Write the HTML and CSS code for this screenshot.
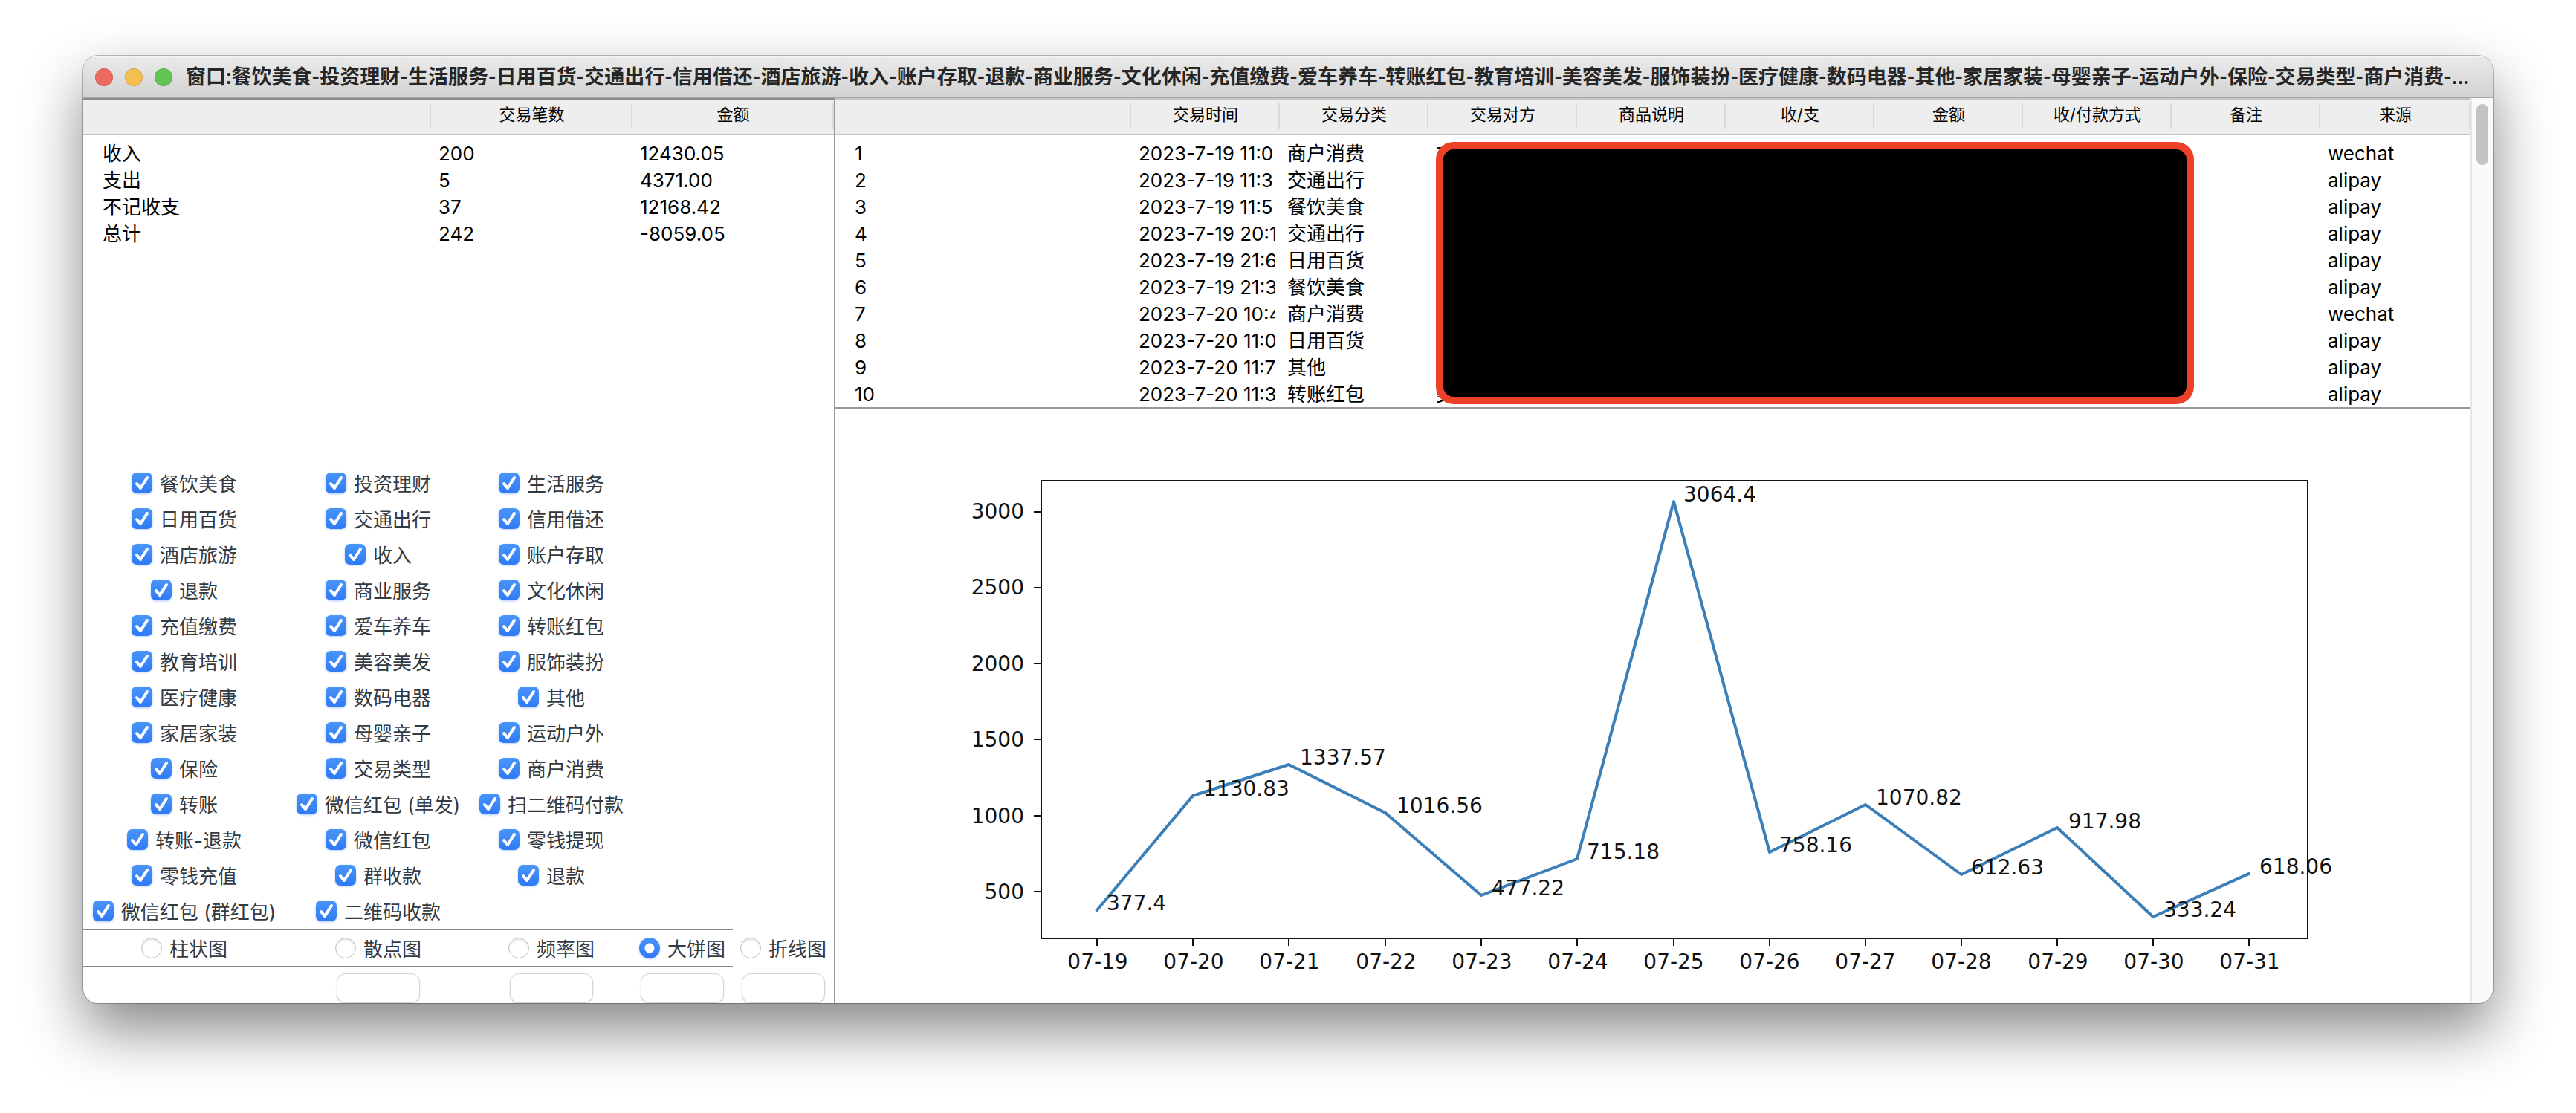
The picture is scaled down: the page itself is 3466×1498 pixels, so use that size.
FILE: index.html
```html
<!DOCTYPE html>
<html lang="zh-CN">
<head>
<meta charset="utf-8">
<title>账单统计</title>
<link rel="stylesheet" href="styles.css">
</head>
<body>
<main class="window">
  <header class="titlebar">
    <div class="lights">
      <button class="light close" aria-label="关闭"></button>
      <button class="light minimize" aria-label="最小化"></button>
      <button class="light zoom" aria-label="缩放"></button>
    </div>
    <h1 class="title">窗口:餐饮美食-投资理财-生活服务-日用百货-交通出行-信用借还-酒店旅游-收入-账户存取-退款-商业服务-文化休闲-充值缴费-爱车养车-转账红包-教育培训-美容美发-服饰装扮-医疗健康-数码电器-其他-家居家装-母婴亲子-运动户外-保险-交易类型-商户消费-...</h1>
  </header>
  <div class="content">
    <section class="side">
      <table class="tree summary">
        <thead><tr><th class="name"></th><th>交易笔数</th><th>金额</th></tr></thead>
        <tbody>
          <tr><td>收入</td><td>200</td><td>12430.05</td></tr>
          <tr><td>支出</td><td>5</td><td>4371.00</td></tr>
          <tr><td>不记收支</td><td>37</td><td>12168.42</td></tr>
          <tr><td>总计</td><td>242</td><td>-8059.05</td></tr>
        </tbody>
      </table>
      <form class="controls">
        <div class="grid filters">
          <label><input type="checkbox" checked>餐饮美食</label>
          <label><input type="checkbox" checked>投资理财</label>
          <label><input type="checkbox" checked>生活服务</label>
          <label class="first"><input type="checkbox" checked>日用百货</label>
          <label><input type="checkbox" checked>交通出行</label>
          <label><input type="checkbox" checked>信用借还</label>
          <label class="first"><input type="checkbox" checked>酒店旅游</label>
          <label><input type="checkbox" checked>收入</label>
          <label><input type="checkbox" checked>账户存取</label>
          <label class="first"><input type="checkbox" checked>退款</label>
          <label><input type="checkbox" checked>商业服务</label>
          <label><input type="checkbox" checked>文化休闲</label>
          <label class="first"><input type="checkbox" checked>充值缴费</label>
          <label><input type="checkbox" checked>爱车养车</label>
          <label><input type="checkbox" checked>转账红包</label>
          <label class="first"><input type="checkbox" checked>教育培训</label>
          <label><input type="checkbox" checked>美容美发</label>
          <label><input type="checkbox" checked>服饰装扮</label>
          <label class="first"><input type="checkbox" checked>医疗健康</label>
          <label><input type="checkbox" checked>数码电器</label>
          <label><input type="checkbox" checked>其他</label>
          <label class="first"><input type="checkbox" checked>家居家装</label>
          <label><input type="checkbox" checked>母婴亲子</label>
          <label><input type="checkbox" checked>运动户外</label>
          <label class="first"><input type="checkbox" checked>保险</label>
          <label><input type="checkbox" checked>交易类型</label>
          <label><input type="checkbox" checked>商户消费</label>
          <label class="first"><input type="checkbox" checked>转账</label>
          <label><input type="checkbox" checked>微信红包 (单发)</label>
          <label><input type="checkbox" checked>扫二维码付款</label>
          <label class="first"><input type="checkbox" checked>转账-退款</label>
          <label><input type="checkbox" checked>微信红包</label>
          <label><input type="checkbox" checked>零钱提现</label>
          <label class="first"><input type="checkbox" checked>零钱充值</label>
          <label><input type="checkbox" checked>群收款</label>
          <label><input type="checkbox" checked>退款</label>
          <label class="first"><input type="checkbox" checked>微信红包 (群红包)</label>
          <label><input type="checkbox" checked>二维码收款</label>
        </div>
        <div class="grid charts">
          <label><input type="radio" name="chart">柱状图</label>
          <label><input type="radio" name="chart">散点图</label>
          <label><input type="radio" name="chart">频率图</label>
          <label><input type="radio" name="chart" checked>大饼图</label>
          <label><input type="radio" name="chart">折线图</label>
        </div>
        <div class="grid actions">
          <button type="button" class="action first-action" aria-label="操作一"></button>
          <button type="button" class="action" aria-label="操作二"></button>
          <button type="button" class="action" aria-label="操作三"></button>
          <button type="button" class="action" aria-label="操作四"></button>
        </div>
      </form>
    </section>
    <section class="detail">
      <div class="records">
        <table class="tree">
          <thead><tr><th class="name"></th><th>交易时间</th><th>交易分类</th><th>交易对方</th><th>商品说明</th><th>收/支</th><th>金额</th><th>收/付款方式</th><th>备注</th><th class="source">来源</th></tr></thead>
          <tbody>
            <tr><td>1</td><td>2023-7-19 11:0</td><td>商户消费</td><td>支</td><td></td><td></td><td></td><td></td><td></td><td>wechat</td></tr>
            <tr><td>2</td><td>2023-7-19 11:3</td><td>交通出行</td><td></td><td></td><td></td><td></td><td></td><td></td><td>alipay</td></tr>
            <tr><td>3</td><td>2023-7-19 11:5</td><td>餐饮美食</td><td></td><td></td><td></td><td></td><td></td><td></td><td>alipay</td></tr>
            <tr><td>4</td><td>2023-7-19 20:1</td><td>交通出行</td><td></td><td></td><td></td><td></td><td></td><td></td><td>alipay</td></tr>
            <tr><td>5</td><td>2023-7-19 21:6</td><td>日用百货</td><td></td><td></td><td></td><td></td><td></td><td></td><td>alipay</td></tr>
            <tr><td>6</td><td>2023-7-19 21:3</td><td>餐饮美食</td><td></td><td></td><td></td><td></td><td></td><td></td><td>alipay</td></tr>
            <tr><td>7</td><td>2023-7-20 10:4</td><td>商户消费</td><td></td><td></td><td></td><td></td><td></td><td></td><td>wechat</td></tr>
            <tr><td>8</td><td>2023-7-20 11:0</td><td>日用百货</td><td></td><td></td><td></td><td></td><td></td><td></td><td>alipay</td></tr>
            <tr><td>9</td><td>2023-7-20 11:7</td><td>其他</td><td></td><td></td><td></td><td></td><td></td><td></td><td>alipay</td></tr>
            <tr><td>10</td><td>2023-7-20 11:3</td><td>转账红包</td><td>美</td><td></td><td></td><td></td><td></td><td></td><td>alipay</td></tr>
          </tbody>
        </table>
        <div class="mask"></div>
      </div>
      <svg class="chart" viewBox="0 0 2200 800" role="img" aria-label="折线图">
        <path class="axis" d="M277 97H1981V713H277ZM267 139H277M267 241H277M267 343H277M267 445H277M267 548H277M267 650H277M352 713V723M481 713V723M610 713V723M740 713V723M869 713V723M998 713V723M1128 713V723M1257 713V723M1386 713V723M1515 713V723M1644 713V723M1773 713V723M1902 713V723"/>
        <polyline class="line" points="352,675 481,521 610,479 740,544 869,655 998,606 1128,125 1257,597 1386,533 1515,627 1644,564 1773,684 1902,626"/>
        <g class="ylabels">
          <text x="254" y="148">3000</text><text x="254" y="250">2500</text><text x="254" y="353">2000</text><text x="254" y="455">1500</text><text x="254" y="558">1000</text><text x="254" y="660">500</text>
        </g>
        <g class="xlabels">
          <text x="353" y="754">07-19</text><text x="482" y="754">07-20</text><text x="611" y="754">07-21</text><text x="741" y="754">07-22</text><text x="870" y="754">07-23</text><text x="999" y="754">07-24</text><text x="1128" y="754">07-25</text><text x="1257" y="754">07-26</text><text x="1386" y="754">07-27</text><text x="1515" y="754">07-28</text><text x="1645" y="754">07-29</text><text x="1774" y="754">07-30</text><text x="1903" y="754">07-31</text>
        </g>
        <g>
          <text x="365" y="675">377.4</text><text x="495" y="521">1130.83</text><text x="625" y="479">1337.57</text><text x="755" y="544">1016.56</text><text x="883" y="655">477.22</text><text x="1011" y="606">715.18</text><text x="1141" y="125">3064.4</text><text x="1270" y="597">758.16</text><text x="1400" y="533">1070.82</text><text x="1528" y="627">612.63</text><text x="1659" y="565">917.98</text><text x="1787" y="684">333.24</text><text x="1916" y="626">618.06</text>
        </g>
      </svg>
    </section>
    <div class="scrollbar"><div class="thumb"></div></div>
  </div>
</main>
</body>
</html>
```
FILE: styles.css
```css
* {
  box-sizing: border-box;
}

body {
  margin: 0;
  padding: 75px 112px 148px;
  background: #fff;
  color: #000;
  font: 26px/36px Inter, "Noto Sans CJK SC", sans-serif;
  overflow: hidden;
}

.window {
  border-radius: 20px;
  background: #fff;
  overflow: hidden;
  box-shadow: 0 0 0 1px rgba(0, 0, 0, 0.25), 0 36px 80px rgba(0, 0, 0, 0.48);
}

/* Title bar */
.titlebar {
  display: flex;
  align-items: center;
  gap: 18px;
  height: 57px;
  padding: 2px 16px 0;
  border-bottom: 2px solid #a8a8a8;
  background: linear-gradient(#ebebeb, #d3d3d3);
  box-shadow: inset 0 2px 0 #f4f4f4;
}

.lights {
  display: flex;
  gap: 16px;
}

.light {
  width: 24px;
  height: 24px;
  padding: 0;
  border: 1px solid rgba(0, 0, 0, 0.12);
  border-radius: 50%;
}

.close {
  background: #ed6a5e;
}

.minimize {
  background: #f5bf4f;
}

.zoom {
  background: #61c454;
}

.title {
  margin: 0;
  color: #262626;
  font: 700 27px/36px Roboto, "Noto Sans CJK SC", sans-serif;
  white-space: nowrap;
}

/* Body panes */
.content {
  display: flex;
}

.side {
  display: flex;
  flex: none;
  flex-direction: column;
  justify-content: space-between;
  width: 1012px;
  border-right: 2px solid #999;
}

.detail {
  flex: 1;
  min-width: 0;
}

.scrollbar {
  flex: none;
  width: 30px;
  padding: 8px 6px;
  border-left: 2px solid #e6e6e6;
  background: #fafafa;
}

.thumb {
  width: 16px;
  height: 82px;
  border-radius: 8px;
  background: #c3c3c3;
}

/* Tables */
.tree {
  width: 100%;
  border-collapse: separate;
  border-spacing: 0;
  table-layout: fixed;
}

.tree th {
  width: 200px;
  height: 50px;
  padding: 0 0 6px;
  border-top: 2px solid #c4c4c4;
  border-bottom: 2px solid #c4c4c4;
  background: linear-gradient(#d9d9d9, #d9d9d9) right 4px / 2px 36px no-repeat #eee;
  font-size: 22px;
  font-weight: 400;
}

.summary th {
  width: 271px;
  border-top-color: #8a8a8a;
}

.tree .name {
  width: auto;
}

.tree .source {
  width: 202px;
}

.tree td {
  height: 36px;
  padding: 2px 0 0 10px;
  border-right: 6px solid transparent;
  line-height: 34px;
  overflow: hidden;
  white-space: nowrap;
}

.tree td:first-child {
  padding-left: 26px;
}

.tree tbody tr:first-child td {
  height: 42px;
  padding-top: 8px;
}

.records {
  position: relative;
  border-bottom: 2px solid #999;
}

.mask {
  position: absolute;
  top: 59px;
  right: 372px;
  width: 1020px;
  height: 353px;
  border: 10px solid #ec4027;
  border-radius: 24px;
  background: #000;
}

/* Filters and chart type */
.controls {
  color: #343a42;
}

.grid {
  display: grid;
  grid-template-columns: 272px 250px 216px 136px 136px;
}

.grid label {
  display: flex;
  align-items: center;
  justify-content: center;
  gap: 10px;
  height: 48px;
  padding-top: 4px;
  white-space: nowrap;
}

.filters .first {
  grid-column: 1;
}

.charts {
  background:
    linear-gradient(#8a8a8a, #8a8a8a) 0 0 / 874px 2px no-repeat,
    linear-gradient(#8a8a8a, #8a8a8a) 0 100% / 874px 2px no-repeat;
  padding: 2px 0;
}

input {
  flex: none;
  width: 28px;
  height: 28px;
  margin: 0 0 4px;
  appearance: none;
}

input[type="checkbox"] {
  border-radius: 7px;
  background:
    url("data:image/svg+xml,%3Csvg xmlns='http://www.w3.org/2000/svg' viewBox='0 0 28 28'%3E%3Cpath d='M7 15L12 21L21 7' fill='none' stroke='white' stroke-width='4' stroke-linecap='round' stroke-linejoin='round'/%3E%3C/svg%3E"),
    linear-gradient(#4a95f8, #2f7af6);
  box-shadow: 0 1px 3px rgba(47, 122, 246, 0.4);
}

input[type="radio"] {
  border: 1px solid #c2c2c2;
  border-radius: 50%;
  background: #fff;
  box-shadow: inset 0 2px 3px rgba(0, 0, 0, 0.12);
}

input[type="radio"]:checked {
  border: 0;
  background: radial-gradient(circle, #fff 6px, transparent 7px), linear-gradient(#4a95f8, #2f7af6);
  box-shadow: 0 1px 3px rgba(47, 122, 246, 0.4);
}

.actions {
  justify-items: center;
  padding-top: 8px;
}

.action {
  width: 112px;
  height: 40px;
  border: 1px solid #d4d4d4;
  border-radius: 12px;
  background: #fff;
  box-shadow: 0 1px 2px rgba(0, 0, 0, 0.16);
}

.first-action {
  grid-column: 2;
}

/* Line chart */
.chart {
  display: block;
  width: 100%;
}

.chart text {
  fill: #111;
  font: 28px "DejaVu Sans", sans-serif;
}

.axis {
  fill: none;
  stroke: #111;
  stroke-width: 2px;
}

.line {
  fill: none;
  stroke: #3c7fb8;
  stroke-width: 4px;
  stroke-linejoin: round;
  stroke-linecap: square;
}

.ylabels {
  text-anchor: end;
}

.xlabels {
  text-anchor: middle;
}
```
